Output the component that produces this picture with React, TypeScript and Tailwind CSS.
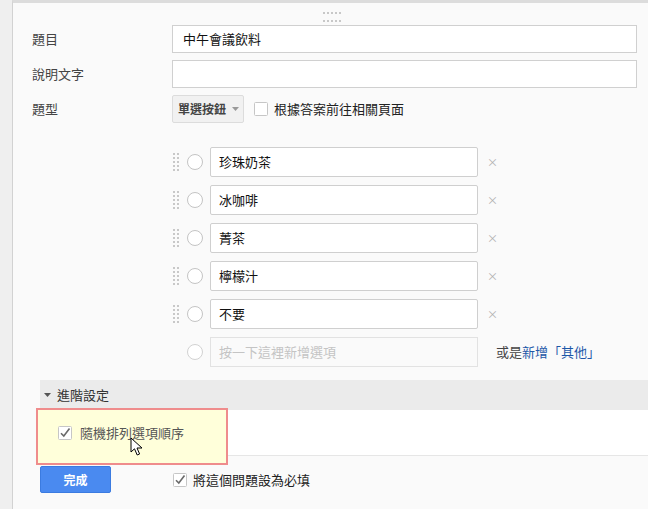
import React from "react";

const font = { fontFamily: '"Noto Sans CJK TC", "Noto Sans", sans-serif' };

function DragDots({ cols, rows }: { cols: number; rows: number }) {
  return (
    <div
      className="grid gap-[2px]"
      style={{ gridTemplateColumns: `repeat(${cols}, 2px)` }}
    >
      {Array.from({ length: cols * rows }).map((_, i) => (
        <div key={i} className="h-[2px] w-[2px] bg-[#c8c8c8]" />
      ))}
    </div>
  );
}

function CheckBox({ checked }: { checked?: boolean }) {
  return (
    <svg width="14" height="14" viewBox="0 0 14 14" className="shrink-0">
      <rect x="0.5" y="0.5" width="13" height="13" fill="#fff" stroke="#c6c6c6" rx="1" />
      {checked && (
        <path d="M3 7.2 L5.8 10 L11.5 2.5" fill="none" stroke="#6a6a6a" strokeWidth="1.6" />
      )}
    </svg>
  );
}

function Caret({ color }: { color: string }) {
  return (
    <svg width="7" height="4" viewBox="0 0 7 4" className="shrink-0">
      <path d="M0 0 L7 0 L3.5 4 Z" fill={color} />
    </svg>
  );
}

const options = ["珍珠奶茶", "冰咖啡", "菁茶", "檸檬汁", "不要"];

export default function App() {
  return (
    <div className="flex h-[509px] w-[648px] overflow-hidden bg-[#efefef]" style={font}>
      <div className="w-[12px] shrink-0 bg-[#efefef]" />
      <div className="relative flex flex-1 flex-col border-l border-t-[3px] border-l-[#d2d2d2] border-t-[#dcdcdc] bg-[#fafafa]">
        {/* top drag handle */}
        <div className="flex h-[22px] justify-center pl-[2px] pt-[9px]">
          <DragDots cols={5} rows={2} />
        </div>

        {/* title row */}
        <div className="flex h-[28px] items-center pl-[19px] pr-[11px]">
          <div className="w-[140px] text-[13px] text-[#444]">題目</div>
          <div className="flex h-[28px] flex-1 items-center border border-[#d0d0d0] bg-white pl-[10px] text-[13px] text-[#111]">
            中午會議飲料
          </div>
        </div>

        {/* description row */}
        <div className="mt-[7px] flex h-[28px] items-center pl-[19px] pr-[11px]">
          <div className="w-[140px] text-[13px] text-[#444]">說明文字</div>
          <div className="h-[28px] flex-1 border border-[#d0d0d0] bg-white" />
        </div>

        {/* type row */}
        <div className="mt-[7px] flex h-[28px] items-center pl-[19px]">
          <div className="w-[140px] text-[13px] text-[#444]">題型</div>
          <div className="flex h-[28px] w-[72px] items-center gap-[6px] rounded-[2px] border border-[#dcdcdc] bg-[#f1f1f1] pl-[5px]">
            <span className="text-[12px] font-bold text-[#444]">單選按鈕</span>
            <Caret color="#999" />
          </div>
          <div className="ml-[10px]">
            <CheckBox />
          </div>
          <span className="ml-[6px] text-[13px] text-[#222]">根據答案前往相關頁面</span>
        </div>

        {/* options */}
        <div className="mt-[24px] flex flex-col gap-[8px] pl-[160px]">
          {options.map((o) => (
            <div key={o} className="flex h-[30px] items-center">
              <div className="flex w-[14px] items-center">
                <DragDots cols={2} rows={5} />
              </div>
              <div className="h-[16px] w-[16px] rounded-full border border-[#c4c4c4] bg-white" />
              <div className="ml-[7px] flex h-[30px] w-[268px] items-center rounded-[2px] border border-[#cfcfcf] bg-white pl-[8px] text-[13px] text-[#111]">
                {o}
              </div>
              <span className="ml-[9px] text-[11px] text-[#b0b0b0]">×</span>
            </div>
          ))}
          <div className="flex h-[30px] items-center">
            <div className="w-[14px]" />
            <div className="h-[16px] w-[16px] rounded-full border border-[#d2d2d2] bg-white" />
            <div className="ml-[7px] flex h-[30px] w-[268px] items-center border border-[#e2e2e2] bg-[#fafafa] pl-[8px] text-[13px] text-[#c4c4c4]">
              按一下這裡新增選項
            </div>
            <span className="ml-[18px] text-[13px] text-[#444]">
              或是<span className="text-[#1c57a8]">新增「其他」</span>
            </span>
          </div>
        </div>

        {/* advanced settings */}
        <div className="ml-[27px] mt-[13px] flex h-[30px] items-center bg-[#ebebeb] pl-[4px]">
          <Caret color="#555" />
          <span className="ml-[6px] text-[13px] text-[#333]">進階設定</span>
        </div>
        <div className="relative ml-[27px] flex h-[46px] items-center border-b border-[#e6e6e6] bg-white">
          <div className="absolute left-[-4px] top-[-2px] h-[57px] w-[192px] border-2 border-[#ef8c8c] bg-[#ffffda]" />
          <div className="relative z-10 ml-[18px] mt-[1px] flex items-center">
            <CheckBox checked />
            <span className="ml-[8px] text-[13px] text-[#555]">隨機排列選項順序</span>
          </div>
          <svg
            className="absolute left-[90px] top-[27px] z-20"
            width="16"
            height="20"
            viewBox="0 0 16 20"
          >
            <path
              d="M1 1 L1 15 L4.5 11.8 L7.2 18 L9.6 17 L7 11 L12 11 Z"
              fill="#fff"
              stroke="#000"
              strokeWidth="1"
              strokeLinejoin="round"
            />
          </svg>
        </div>

        {/* bottom */}
        <div className="ml-[27px] mt-[10px] flex items-center">
          <div className="flex h-[27px] w-[71px] items-center justify-center rounded-[2px] border border-[#3b7be0] bg-[#4a8af0] text-[12px] font-bold text-white">
            完成
          </div>
          <div className="ml-[62px] flex items-center">
            <CheckBox checked />
            <span className="ml-[6px] text-[13px] text-[#222]">將這個問題設為必填</span>
          </div>
        </div>
      </div>
    </div>
  );
}
